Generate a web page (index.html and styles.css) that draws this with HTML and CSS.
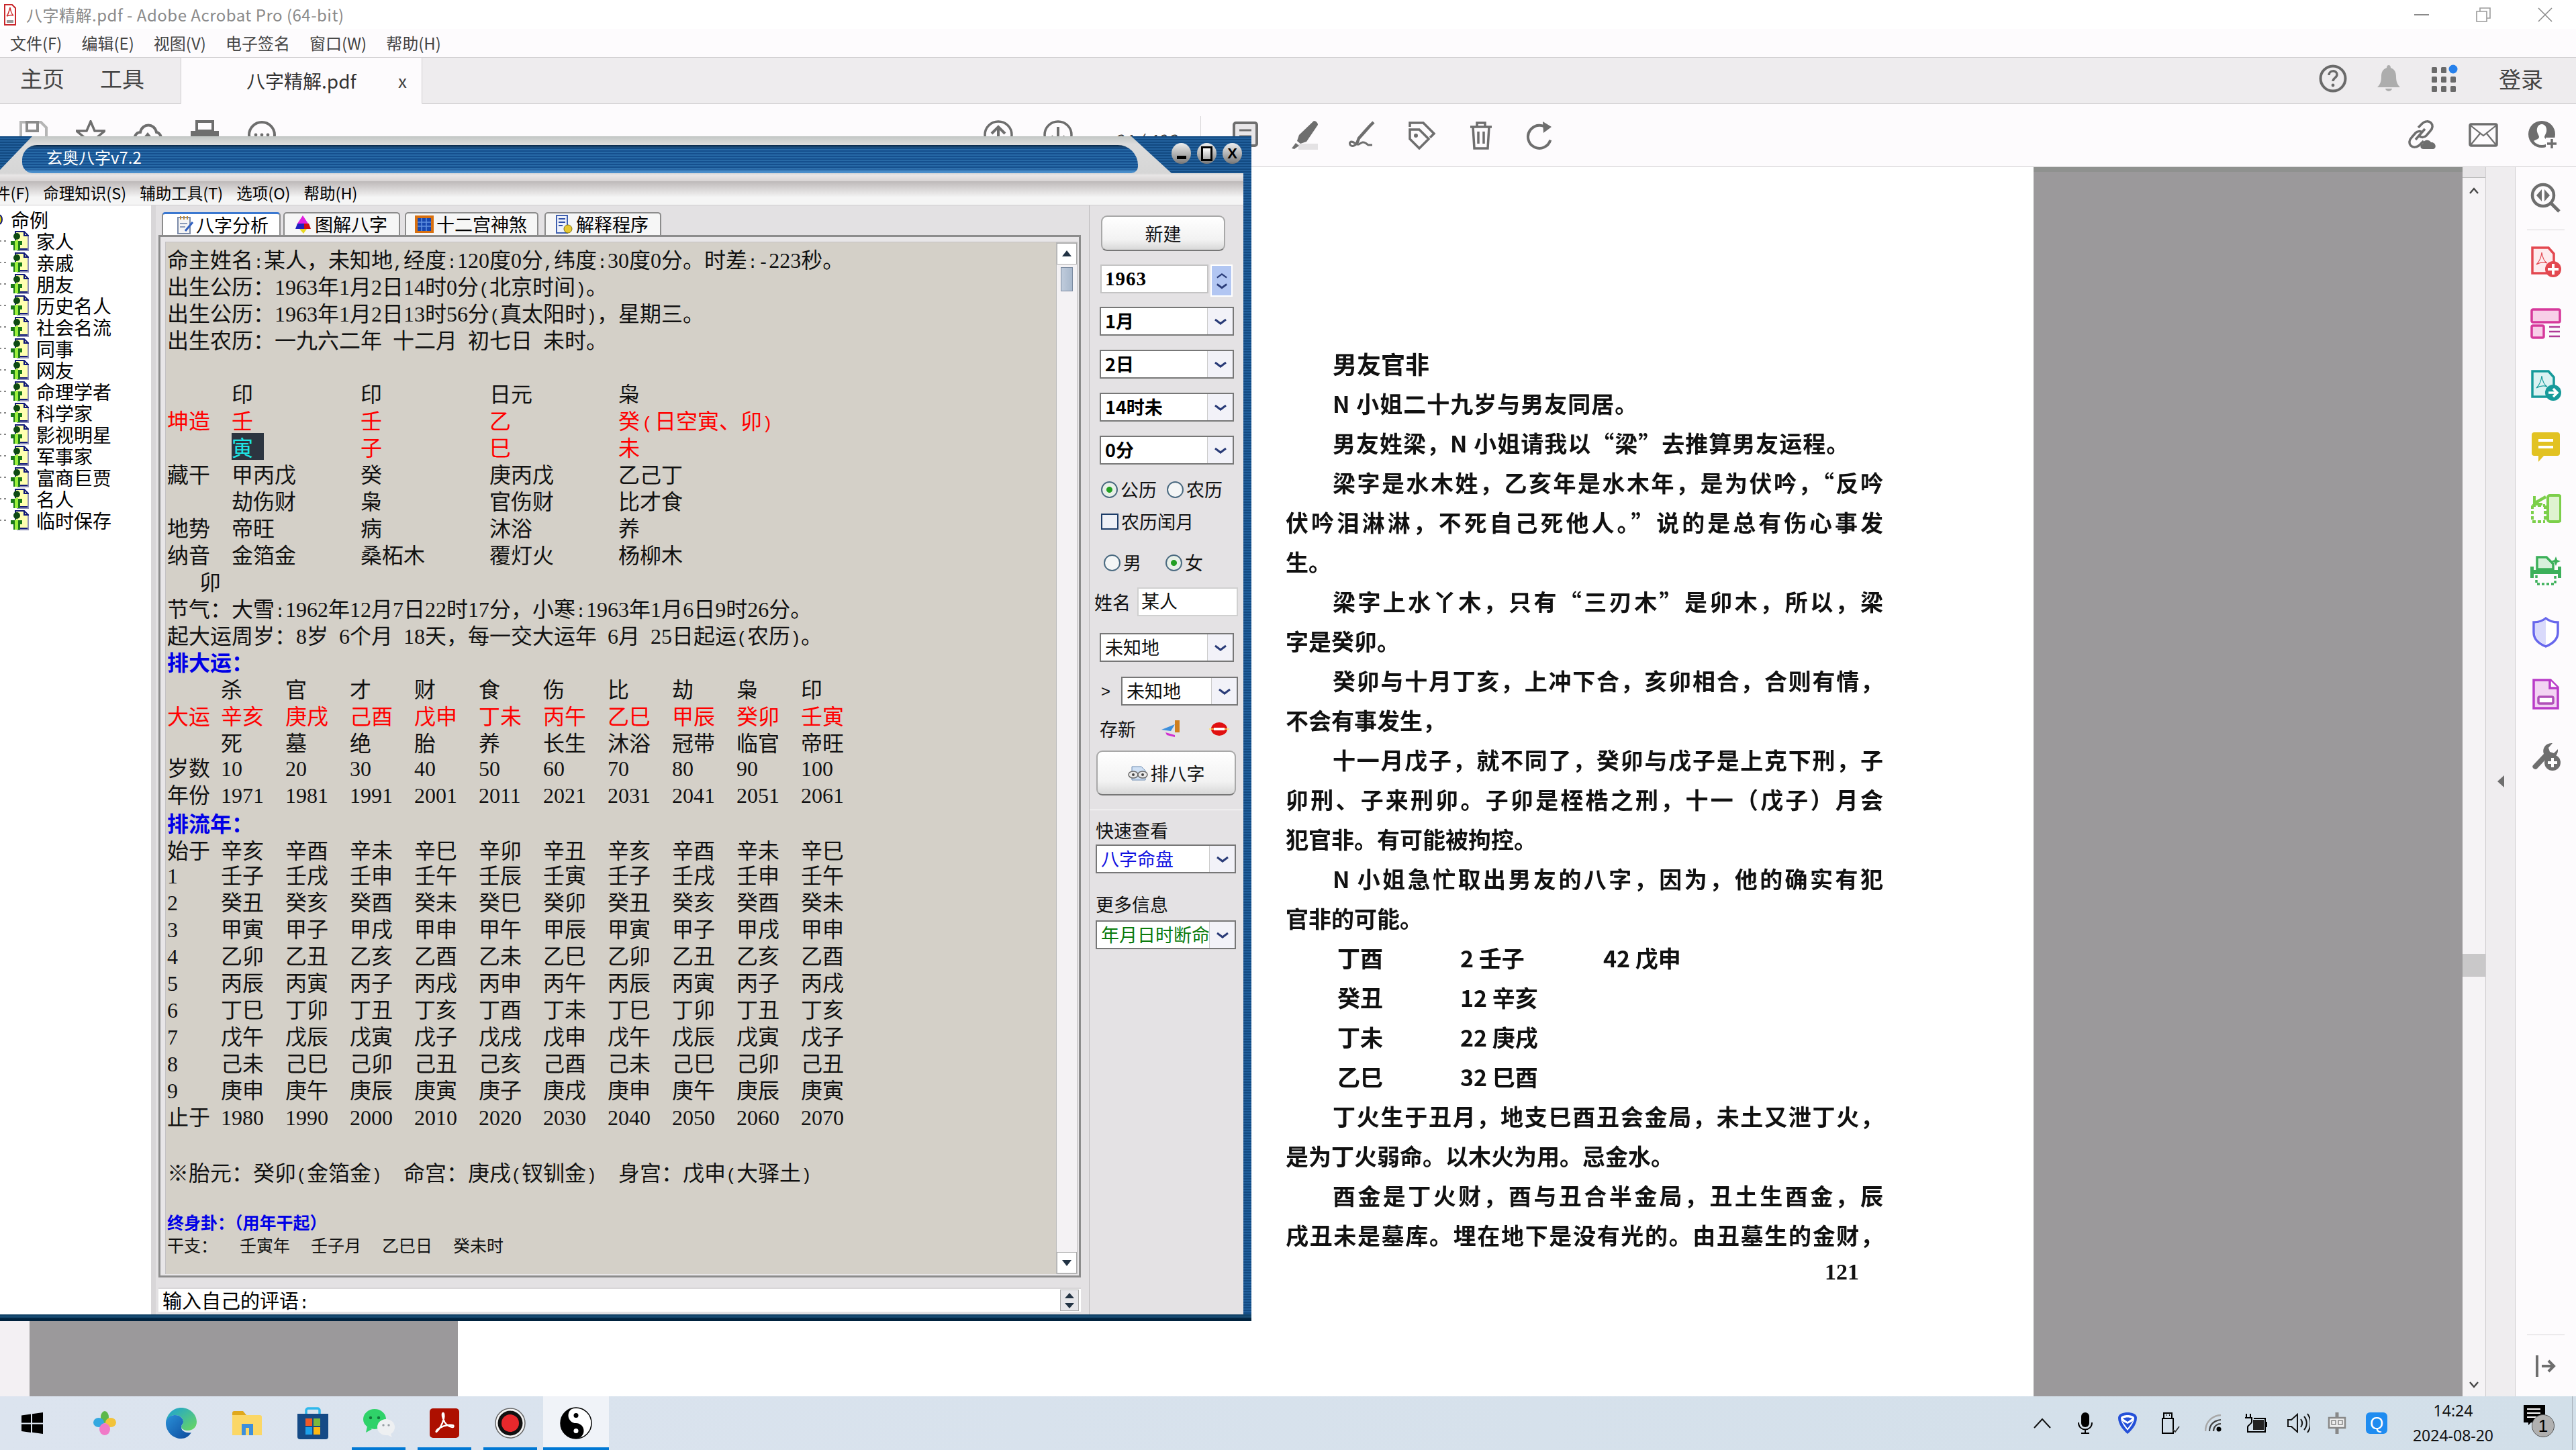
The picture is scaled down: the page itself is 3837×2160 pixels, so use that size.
FILE: index.html
```html
<!DOCTYPE html>
<html lang="zh-CN">

<head>
    <meta charset="UTF-8">
    <title>八字精解.pdf - Adobe Acrobat Pro (64-bit)</title>
    <link rel="stylesheet" href="styles.css">
</head>

<body>
    <svg class="defs" width="0" height="0">
        <symbol id="person" viewBox="0 0 30 30">
            <path d="M9 1h13l6 6v20H9z" fill="#ffffb0" stroke="#101878" stroke-width="2" />
            <path d="M22 1v6h6" fill="none" stroke="#101878" stroke-width="2" />
            <path d="M28 8v21H11" fill="none" stroke="#8f8fb8" stroke-width="2" />
            <circle cx="11" cy="8" r="5" fill="#0d4a12" />
            <path d="M2 15h17v6h-3v8H6v-8H2z" fill="#1a7a1a" />
            <path d="M8 14h5v15H8z" fill="#9cf03c" />
        </symbol>
        <symbol id="chev" viewBox="0 0 20 12">
            <path d="M2 3l8 6 8-6" fill="none" stroke="#2a3c78" stroke-width="3" />
        </symbol>
    </svg>

    <div class="app">
        <div class="titlebar">
            <svg class="title-icon" viewBox="0 0 18 32">
                <path d="M1 1h11l5 5v25H1z" fill="#fff" stroke="#c8262a" stroke-width="2" />
                <path d="M9 5c-2 8-3 11-5 13 4-2 7-2 10-1-3-2-4-6-5-12z" fill="none" stroke="#d03030" stroke-width="1.5" />
                <path d="M4 24h10v4H4z" fill="#999" />
            </svg>
            <span class="title-text">八字精解.pdf - Adobe Acrobat Pro (64-bit)</span>
            <div class="win-btns">
                <span class="win-btn"><svg width="22" height="4"><path d="M0 2h22" stroke="#8a8a8a" stroke-width="2" /></svg></span>
                <span class="win-btn"><svg width="22" height="22" viewBox="0 0 22 22"><path d="M1 6h15v15H1zM6 6V1h15v15h-5" fill="none" stroke="#9a9a9a" stroke-width="1.6" /></svg></span>
                <span class="win-btn"><svg width="22" height="22" viewBox="0 0 22 22"><path d="M1 1l20 20M21 1L1 21" stroke="#8a8a8a" stroke-width="1.6" /></svg></span>
            </div>
        </div>

        <div class="menubar">
            <span>文件(F)</span>
            <span>编辑(E)</span>
            <span>视图(V)</span>
            <span>电子签名</span>
            <span>窗口(W)</span>
            <span>帮助(H)</span>
        </div>

        <div class="tabsbar">
            <span class="nav-tab">主页</span>
            <span class="nav-tab">工具</span>
            <div class="doc-tab">
                <span class="doc-tab-name">八字精解.pdf</span>
                <span class="doc-tab-x">x</span>
            </div>
            <div class="tabs-right">
                <svg class="tr-icon" viewBox="0 0 42 42">
                    <circle cx="21" cy="21" r="18.5" fill="none" stroke="#6a6a6a" stroke-width="4" />
                    <path d="M15 16c0-8 12-8 12-1 0 5-6 5-6 10" fill="none" stroke="#6a6a6a" stroke-width="3.5" />
                    <circle cx="21" cy="31" r="2.4" fill="#6a6a6a" />
                </svg>
                <svg class="tr-icon" viewBox="0 0 42 42">
                    <path d="M21 1c2 0 3 2 3 4 6 2 8 7 8 13 0 8 2 12 6 16H4c4-4 6-8 6-16 0-6 2-11 8-13 0-2 1-4 3-4z" fill="#adadad" />
                    <path d="M16 36h10c-1 5-9 5-10 0z" fill="#adadad" />
                </svg>
                <svg class="tr-icon tr-grid" viewBox="0 0 42 42">
                    <g fill="#6a6a6a">
                        <rect x="2" y="4" width="8" height="9" rx="1.5" /><rect x="16" y="4" width="8" height="9" rx="1.5" />
                        <rect x="2" y="18" width="8" height="9" rx="1.5" /><rect x="16" y="18" width="8" height="9" rx="1.5" /><rect x="30" y="18" width="8" height="9" rx="1.5" />
                        <rect x="2" y="32" width="8" height="9" rx="1.5" /><rect x="16" y="32" width="8" height="9" rx="1.5" /><rect x="30" y="32" width="8" height="9" rx="1.5" />
                    </g>
                    <circle cx="34" cy="7" r="6.5" fill="#2680eb" />
                </svg>
                <span class="login">登录</span>
            </div>
        </div>

        <div class="toolbar">
            <div class="tool-group tool-left">
                <svg class="tool" viewBox="0 0 44 44"><path d="M3 3h30l8 8v30H3z" fill="none" stroke="#b5b5b5" stroke-width="4" /><path d="M12 3h16v13H12z" fill="none" stroke="#8a8a8a" stroke-width="4" /></svg>
                <svg class="tool" viewBox="0 0 44 44"><path d="M22 2l6 14h15l-12 10 5 16-14-9-14 9 5-16L1 16h15z" fill="none" stroke="#6e6e6e" stroke-width="3.5" /></svg>
                <svg class="tool" viewBox="0 0 44 44"><path d="M4 36C-1 26 5 18 11 18 14 4 32 4 35 18c6 1 10 10 5 18" fill="none" stroke="#6e6e6e" stroke-width="4" /><path d="M22 18l-8 10h16z" fill="#6e6e6e" /></svg>
                <svg class="tool" viewBox="0 0 44 44"><path d="M10 2h24v14H10z" fill="none" stroke="#6e6e6e" stroke-width="4" /><path d="M1 16h42v16H1z" fill="#6e6e6e" /></svg>
                <svg class="tool" viewBox="0 0 44 44"><circle cx="22" cy="22" r="19" fill="none" stroke="#6e6e6e" stroke-width="4" /><circle cx="13" cy="22" r="2.4" fill="#6e6e6e" /><circle cx="22" cy="22" r="2.4" fill="#6e6e6e" /><circle cx="31" cy="22" r="2.4" fill="#6e6e6e" /></svg>
            </div>
            <div class="tool-group tool-pager">
                <svg class="tool" viewBox="0 0 44 44"><circle cx="22" cy="22" r="20" fill="none" stroke="#6e6e6e" stroke-width="3.5" /><path d="M22 34V10M12 20l10-10 10 10" fill="none" stroke="#6e6e6e" stroke-width="4" /></svg>
                <svg class="tool" viewBox="0 0 44 44"><circle cx="22" cy="22" r="20" fill="none" stroke="#6e6e6e" stroke-width="3.5" /><path d="M22 10v24M12 24l10 10 10-10" fill="none" stroke="#6e6e6e" stroke-width="4" /></svg>
                <span class="pager-text">64 / 406</span>
            </div>
            <div class="tool-sep"></div>
            <div class="tool-group tool-edit">
                <svg class="tool" viewBox="0 0 44 44"><rect x="6" y="4" width="34" height="34" rx="3" fill="#e8e6e8" stroke="#6e6e6e" stroke-width="4" /><path d="M14 15h18M14 24h18" stroke="#6e6e6e" stroke-width="3" /></svg>
                <svg class="tool" viewBox="0 0 44 44"><rect x="14" y="35" width="29" height="9" fill="#e4e2e4" /><path d="M37 1c3 0 6 3 6 6L26 32l-9 3-5-4 3-9z" fill="#6e6e6e" /><path d="M10 34l5 4-7 5-4-1z" fill="#6e6e6e" /></svg>
                <svg class="tool" viewBox="0 0 44 44"><path d="M38 3l-6 6-16 18-3 8" fill="none" stroke="#6e6e6e" stroke-width="4.5" /><path d="M13 35c-8 8-12 0-10-2 4-4 9 5 13 3 5-3 6-4 10-2l4 3h6" fill="none" stroke="#6e6e6e" stroke-width="3" /></svg>
                <svg class="tool" viewBox="0 0 44 44"><path d="M4 10V4h20l16 16-6 6" fill="none" stroke="#6e6e6e" stroke-width="3.5" /><path d="M4 14h14l14 14-14 14L4 28z" fill="none" stroke="#6e6e6e" stroke-width="3.5" /><circle cx="13" cy="23" r="3" fill="#6e6e6e" /></svg>
                <svg class="tool" viewBox="0 0 44 44"><path d="M6 10h32M16 10V4h12v6M10 10l2 32h20l2-32M18 17v18M26 17v18" fill="none" stroke="#6e6e6e" stroke-width="3.5" /></svg>
                <svg class="tool" viewBox="0 0 44 44"><path d="M30 10A17 17 0 1 0 39 24" fill="none" stroke="#6e6e6e" stroke-width="4" transform="rotate(20 22 22)" /><path d="M26 2l13 8-12 9z" fill="#6e6e6e" /></svg>
            </div>
            <div class="tool-group tool-right">
                <svg class="tool tool-wide" viewBox="0 0 50 46"><path d="M16 30l14-16M20 12l6-6c4-4 10-4 13-1s3 8-1 12l-6 7c-3 3-7 3-10 1M28 32l-6 6c-4 4-10 4-13 1s-3-8 1-12l6-7c3-3 7-3 10-1" fill="none" stroke="#6e6e6e" stroke-width="3.5" /><path d="M28 44c-6 0-6-7-1-8 1-6 9-7 12-2 7-1 10 10 2 10z" fill="#6e6e6e" /></svg>
                <svg class="tool" viewBox="0 0 44 36"><rect x="2" y="2" width="40" height="32" rx="2" fill="none" stroke="#6e6e6e" stroke-width="3.5" /><path d="M3 4l19 15L41 4M3 33l14-17M41 33L27 16" fill="none" stroke="#6e6e6e" stroke-width="2.2" /></svg>
                <svg class="tool" viewBox="0 0 44 44"><circle cx="20" cy="21" r="20" fill="#6e6e6e" /><path d="M20 6c5 0 8 5 7 11-1 4-3 6-3 8 0 3 5 4 8 6-3 4-7 6-12 6s-9-2-12-6c3-2 8-3 8-6 0-2-2-4-3-8-1-6 2-11 7-11z" fill="#fff" /><path d="M26 26h18v18H26z" fill="#fdfbfd" /><path d="M35 28v14M28 35h14" stroke="#6e6e6e" stroke-width="3.5" /></svg>
            </div>
        </div>

        <div class="docarea">
            <div class="doc-gutter"></div>
            <div class="doc-grey doc-grey-left"></div>
            <div class="page">
                <div class="scan">
                    <p class="scan-title">男友官非</p>
                    <p class="ind short">N 小姐二十九岁与男友同居。</p>
                    <p class="ind short">男友姓梁，N 小姐请我以“梁”去推算男友运程。</p>
                    <p class="ind full">梁字是水木姓，乙亥年是水木年，是为伏吟，“反吟</p>
                    <p class="full">伏吟泪淋淋，不死自己死他人。”说的是总有伤心事发</p>
                    <p>生。</p>
                    <p class="ind full">梁字上水丫木，只有“三刃木”是卯木，所以，梁</p>
                    <p>字是癸卯。</p>
                    <p class="ind full">癸卯与十月丁亥，上冲下合，亥卯相合，合则有情，</p>
                    <p>不会有事发生，</p>
                    <p class="ind full">十一月戊子，就不同了，癸卯与戊子是上克下刑，子</p>
                    <p class="full">卯刑、子来刑卯。子卯是桎梏之刑，十一（戊子）月会</p>
                    <p>犯官非。有可能被拘控。</p>
                    <p class="ind full">N 小姐急忙取出男友的八字，因为，他的确实有犯</p>
                    <p>官非的可能。</p>
                    <p class="pillar"><span>丁酉</span><span>2 壬子</span><span>42 戊申</span></p>
                    <p class="pillar"><span>癸丑</span><span>12 辛亥</span></p>
                    <p class="pillar"><span>丁未</span><span>22 庚戌</span></p>
                    <p class="pillar"><span>乙巳</span><span>32 巳酉</span></p>
                    <p class="ind full">丁火生于丑月，地支巳酉丑会金局，未土又泄丁火，</p>
                    <p>是为丁火弱命。以木火为用。忌金水。</p>
                    <p class="ind full">酉金是丁火财，酉与丑合半金局，丑土生酉金，辰</p>
                    <p class="full">戌丑未是墓库。埋在地下是没有光的。由丑墓生的金财，</p>
                    <p class="folio">121</p>
                </div>
            </div>
            <div class="doc-grey doc-grey-right"></div>
            <div class="doc-scroll">
                <div class="doc-scroll-cap"></div>
                <svg class="doc-scroll-up" width="14" height="12" viewBox="0 0 14 12"><path d="M1 10l6-7 6 7" fill="none" stroke="#444" stroke-width="2.4" /></svg>
                <div class="doc-scroll-thumb"></div>
                <svg class="doc-scroll-down" width="14" height="12" viewBox="0 0 14 12"><path d="M1 2l6 7 6-7" fill="none" stroke="#444" stroke-width="2.4" /></svg>
            </div>
            <div class="doc-panel">
                <svg width="12" height="18" viewBox="0 0 12 18"><path d="M11 0v18L1 9z" fill="#6e6e6e" /></svg>
            </div>
            <div class="rail">
                <svg class="rail-icon" viewBox="0 0 46 46"><circle cx="19" cy="19" r="16" fill="none" stroke="#6e6e6e" stroke-width="4.5" /><path d="M30 30l13 13" stroke="#6e6e6e" stroke-width="5" /><path d="M17 10v18l-8-9zM21 10v18l8-9z" fill="#6e6e6e" /></svg>
                <div class="rail-sep"></div>
                <svg class="rail-icon" viewBox="0 0 46 46"><path d="M3 2h24l8 9v29H3z" fill="#fdecee" stroke="#e34850" stroke-width="3.5" /><path d="M17 9c-1 9-4 14-8 18 5-3 11-4 16-2-5-3-7-9-8-16z" fill="none" stroke="#e34850" stroke-width="1.2" /><circle cx="34" cy="34" r="12" fill="#e34850" /><path d="M34 26v16M26 34h16" stroke="#fff" stroke-width="4" /></svg>
                <svg class="rail-icon" viewBox="0 0 46 46"><rect x="2" y="2" width="42" height="19" rx="2" fill="#f8cfe8" stroke="#d6399b" stroke-width="3.5" /><rect x="2" y="26" width="18" height="18" rx="2" fill="#f8cfe8" stroke="#d6399b" stroke-width="3.5" /><path d="M28 28h16M28 35h16M28 42h16" stroke="#b03a96" stroke-width="2.4" /></svg>
                <svg class="rail-icon" viewBox="0 0 46 46"><path d="M3 2h24l8 9v29H3z" fill="#dcf2f2" stroke="#169a9a" stroke-width="3.5" /><path d="M17 9c-1 9-4 14-8 18 5-3 11-4 16-2-5-3-7-9-8-16z" fill="none" stroke="#169a9a" stroke-width="1.2" /><circle cx="34" cy="34" r="12" fill="#169a9a" /><path d="M27 34h13M34 28l6 6-6 6" fill="none" stroke="#fff" stroke-width="3.5" /></svg>
                <svg class="rail-icon" viewBox="0 0 46 46"><path d="M6 1h34a4 4 0 0 1 4 4v27a4 4 0 0 1-4 4H20l-8 9v-9H6a4 4 0 0 1-4-4V5a4 4 0 0 1 4-4z" fill="#e2c222" /><path d="M12 13h22M12 23h22" stroke="#fff" stroke-width="4" /></svg>
                <svg class="rail-icon" viewBox="0 0 46 46"><rect x="26" y="3" width="19" height="39" rx="3" fill="#dff3d0" stroke="#7ccf4a" stroke-width="4" /><path d="M3 18h19M3 18v24h19M22 18v24" fill="none" stroke="#7ccf4a" stroke-width="4" stroke-dasharray="5 3" /><path d="M20 2L6 10v-7h-4v14h14v-4h-6l12-7z" fill="#7ccf4a" transform="translate(2 1)" /></svg>
                <svg class="rail-icon" viewBox="0 0 46 46"><path d="M10 21V3h14l10 10v8z" fill="#d8f0dc" stroke="#3cb05a" stroke-width="3.5" /><path d="M0 17h5v5h36v-5h5v17h-5v-6H5v6H0z" fill="#3cb05a" /><path d="M9 30v13h28V30" fill="none" stroke="#3cb05a" stroke-width="3.5" stroke-dasharray="4 3" /><path d="M38 2l2 5 5 2-5 2-2 5-2-5-5-2 5-2z" fill="#3cb05a" /></svg>
                <svg class="rail-icon" viewBox="0 0 46 46"><path d="M23 2c5 4 11 6 18 6v15c0 10-8 17-18 21C13 40 5 33 5 23V8c7 0 13-2 18-6z" fill="#fff" stroke="#6767ec" stroke-width="3.5" /><path d="M23 4c-5 4-10 5-16 6v13c0 9 8 15 16 19z" fill="#d9dafb" /></svg>
                <svg class="rail-icon" viewBox="0 0 46 46"><path d="M5 2h25l11 11v31H5z" fill="#f3d4f3" stroke="#b93cc8" stroke-width="3.5" /><path d="M29 2v12h12" fill="#fff" stroke="#b93cc8" stroke-width="3.5" /><rect x="12" y="27" width="22" height="10" rx="2" fill="#fff" stroke="#b050b8" stroke-width="3.5" /></svg>
                <svg class="rail-icon" viewBox="0 0 46 46"><path d="M4 37L20 20c-3-8 3-17 13-16l-6 7 2 6 6 2 6-6c1 9-7 16-16 13L10 42c-3 3-9-2-6-5z" fill="#6e6e6e" /><circle cx="33" cy="33" r="12" fill="#6e6e6e" /><path d="M33 26v14M26 33h14" stroke="#fff" stroke-width="4" /></svg>
                <div class="rail-sep rail-sep-end"></div>
                <svg class="rail-icon rail-collapse" viewBox="0 0 30 32"><path d="M2 0v32" stroke="#6e6e6e" stroke-width="4" /><path d="M9 16h17M19 8l8 8-8 8" fill="none" stroke="#6e6e6e" stroke-width="4" /></svg>
            </div>
        </div>

        <div class="taskbar">
            <span class="tb-item tb-start">
                <svg width="32" height="32" viewBox="0 0 32 32"><path d="M0 4.500l14-2v13H0zM16 2.200l16-2.200v15.500H16zM0 17.500h14v12.500l-14-2zM16 17.500h16V32l-16-2.300z" fill="#000" /></svg>
            </span>
            <span class="tb-item tb-flower">
                <svg width="34" height="36" viewBox="0 0 34 36"><ellipse cx="17" cy="9" rx="6" ry="9" fill="#5cb84a" /><ellipse cx="8" cy="17" rx="8" ry="7" fill="#34a8e0" /><ellipse cx="26" cy="17" rx="8" ry="7" fill="#f2c33a" /><ellipse cx="17" cy="27" rx="8" ry="9" fill="#f07ac8" /></svg>
            </span>
            <span class="tb-item tb-edge">
                <svg width="48" height="48" viewBox="0 0 48 48">
                    <defs>
                        <linearGradient id="edgeTop" x1="0" y1="0" x2="1" y2="1"><stop offset="0" stop-color="#1aa0d8" /><stop offset="1" stop-color="#6cd85c" /></linearGradient>
                        <linearGradient id="edgeLow" x1="0" y1="0" x2="1" y2="1"><stop offset="0" stop-color="#2a90d8" /><stop offset="1" stop-color="#0c4a9c" /></linearGradient>
                    </defs>
                    <path d="M24 1c13 0 23 10 23 21 0 8-6 13-13 13-5 0-10-2-10-6 0-2 3-4 3-7 0-6-6-10-12-10C9 12 3 17 1 23 2 11 12 1 24 1z" fill="url(#edgeTop)" />
                    <path d="M1 24c0-7 7-12 14-12 7 0 12 5 12 10 0 3-3 4-3 8 0 6 7 9 15 8-4 6-9 9-15 9C11 47 1 36 1 24z" fill="url(#edgeLow)" />
                </svg>
            </span>
            <span class="tb-item">
                <svg width="44" height="36" viewBox="0 0 44 36"><path d="M0 3a3 3 0 0 1 3-3h13l5 6H0z" fill="#e0a81c" /><path d="M0 6h41a3 3 0 0 1 3 3v27H0z" fill="#fbd766" /><path d="M14 36V19h17v17h-6V25h-5v11z" fill="#3d8fdc" /></svg>
            </span>
            <span class="tb-item">
                <svg width="46" height="48" viewBox="0 0 46 48"><path d="M13 10V5a3 3 0 0 1 3-3h14a3 3 0 0 1 3 3v5" fill="none" stroke="#2fb8ec" stroke-width="3.500" /><path d="M0 10h46v34a4 4 0 0 1-4 4H4a4 4 0 0 1-4-4z" fill="#154a86" /><rect x="12" y="17" width="10" height="11" fill="#f05a28" /><rect x="24" y="17" width="10" height="11" fill="#7cb93c" /><rect x="12" y="30" width="10" height="11" fill="#1ea0ea" /><rect x="24" y="30" width="10" height="11" fill="#fcb814" /></svg>
            </span>
            <span class="tb-item tb-open">
                <svg width="48" height="42" viewBox="0 0 48 42"><ellipse cx="18" cy="15" rx="17" ry="15" fill="#2fd269" /><path d="M7 26l-2 9 9-5z" fill="#2fd269" /><circle cx="12" cy="13" r="2.200" fill="#12763a" /><circle cx="24" cy="13" r="2.200" fill="#12763a" /><ellipse cx="35" cy="27" rx="13" ry="12" fill="#eef0f2" /><path d="M41 35l3 7-8-4z" fill="#eef0f2" /><circle cx="31" cy="24" r="1.700" fill="#99a0a6" /><circle cx="39" cy="24" r="1.700" fill="#99a0a6" /></svg>
            </span>
            <span class="tb-item tb-open">
                <svg width="44" height="44" viewBox="0 0 44 44"><rect x="0" y="0" width="44" height="44" rx="5" fill="#ad0f00" /><path d="M10 35c4-3 9-11 11-20 1-5 0-8-1-8s-2 3 0 8c2 7 7 12 14 13 2 0 2-3 0-3-7-1-15 1-22 6-2 2-3 4-2 4z" fill="none" stroke="#fff" stroke-width="2.400" /></svg>
            </span>
            <span class="tb-item tb-open">
                <svg width="46" height="46" viewBox="0 0 46 46"><circle cx="23" cy="23" r="22" fill="#f4f4f4" stroke="#666" stroke-width="1.500" /><circle cx="23" cy="23" r="18.500" fill="#111" /><circle cx="23" cy="23" r="13" fill="#e8282c" /></svg>
            </span>
            <span class="tb-item tb-open tb-active">
                <svg width="48" height="48" viewBox="0 0 48 48"><circle cx="24" cy="24" r="23" fill="#fff" stroke="#000" stroke-width="1.500" /><path d="M24 1a23 23 0 0 0 0 46a11.500 11.500 0 0 0 0-23a11.500 11.500 0 0 1 0-23z" fill="#000" /><circle cx="24" cy="12.500" r="3.500" fill="#000" /><circle cx="24" cy="35.500" r="3.500" fill="#fff" /></svg>
            </span>

            <div class="tray">
                <span class="tray-item"><svg width="26" height="16" viewBox="0 0 26 16"><path d="M1 15L13 2l12 13" fill="none" stroke="#111" stroke-width="2" /></svg></span>
                <span class="tray-item"><svg width="24" height="32" viewBox="0 0 24 32"><rect x="6" y="0" width="12" height="22" rx="6" fill="#000" /><path d="M2 15c0 14 20 14 20 0M12 26v5M6 31h12" fill="none" stroke="#000" stroke-width="2" /></svg></span>
                <span class="tray-item"><svg width="32" height="32" viewBox="0 0 32 32"><path d="M16 0c6 0 14 2 14 8 0 10-8 19-14 24C10 27 2 18 2 8c0-6 8-8 14-8z" fill="#2450d8" /><path d="M16 4c4 0 9 1 10 4 0 7-6 14-10 19C12 22 6 15 6 8c1-3 6-4 10-4z" fill="#fff" /><path d="M8 13l8 11 8-11-8 4z" fill="#2450d8" /><path d="M9 9c4-2 10-2 14 0l-7 5z" fill="#2450d8" /></svg></span>
                <span class="tray-item"><svg width="28" height="32" viewBox="0 0 28 32"><path d="M4 9V1h12v8M2 9h16v22H2z" fill="none" stroke="#000" stroke-width="2" /><path d="M8 4h1M12 4h1" stroke="#000" stroke-width="2" /><path d="M18 26l3 3 6-8" fill="none" stroke="#333" stroke-width="1.800" /></svg></span>
                <span class="tray-item"><svg width="26" height="26" viewBox="0 0 26 26"><path d="M1 25C1 12 10 2 24 1" fill="none" stroke="#a8a8a8" stroke-width="2.500" /><path d="M7 25c0-10 7-16 17-17M13 25c0-6 4-11 11-11" fill="none" stroke="#444" stroke-width="2.200" /><circle cx="21" cy="22" r="3.500" fill="#000" /></svg></span>
                <span class="tray-item"><svg width="34" height="28" viewBox="0 0 34 28"><path d="M3 0v6M9 0v6M1 6h10v6c0 4-6 4-6 8v7h26V7H14" fill="none" stroke="#000" stroke-width="2" /><rect x="13" y="9" width="16" height="15" fill="#222" /><rect x="31" y="12" width="3" height="8" fill="#000" /></svg></span>
                <span class="tray-item"><svg width="34" height="30" viewBox="0 0 34 30"><path d="M1 10h5l9-8v26l-9-8H1z" fill="none" stroke="#111" stroke-width="2" /><path d="M20 9c3 4 3 8 0 12M25 5c5 6 5 14 0 20M30 1c6 8 6 20 0 28" fill="none" stroke="#111" stroke-width="2" /></svg></span>
                <span class="tray-item tray-ime"><svg width="28" height="32" viewBox="0 0 28 32"><path d="M14 0v32" stroke="#888" stroke-width="5" /><rect x="2" y="8" width="24" height="15" fill="#eee" stroke="#888" stroke-width="2.500" /><path d="M6 12h6v6H6zM16 12h6v6h-6z" fill="none" stroke="#888" stroke-width="1.500" /></svg></span>
                <span class="tray-item tray-q"><span class="q-logo">Q</span></span>
                <div class="clock">
                    <span>14:24</span>
                    <span>2024-08-20</span>
                </div>
                <div class="notify">
                    <svg width="34" height="30" viewBox="0 0 34 30"><path d="M1 0h32v26H12l-4 4v-4H1z" fill="#000" /><path d="M6 6h20M6 12h20M6 18h20" stroke="#fff" stroke-width="2" /></svg>
                    <span class="notify-badge">1</span>
                </div>
                <div class="tb-edge-line"></div>
            </div>
        </div>
    </div>

    <!-- ventana de Xuan'ao Bazi, encima de Acrobat -->
    <div class="dlg">
        <div class="dlg-title">
            <div class="dlg-silver"></div>
            <div class="dlg-pill"><span class="dlg-name">玄奥八字v7.2</span></div>
            <div class="dlg-btns">
                <span class="dlg-btn"><i class="dlg-min"></i></span>
                <span class="dlg-btn"><i class="dlg-max"></i></span>
                <span class="dlg-btn">X</span>
            </div>
        </div>
        <div class="dlg-menu">
            <span class="dlg-menu-first">件(F)</span>
            <span>命理知识(S)</span>
            <span>辅助工具(T)</span>
            <span>选项(O)</span>
            <span>帮助(H)</span>
        </div>
        <div class="dlg-body">
            <div class="tree">
                <div class="tree-root"><i class="tree-knob"></i>命例</div>
                <div class="tree-row"><svg><use href="#person" /></svg>家人</div>
                <div class="tree-row"><svg><use href="#person" /></svg>亲戚</div>
                <div class="tree-row"><svg><use href="#person" /></svg>朋友</div>
                <div class="tree-row"><svg><use href="#person" /></svg>历史名人</div>
                <div class="tree-row"><svg><use href="#person" /></svg>社会名流</div>
                <div class="tree-row"><svg><use href="#person" /></svg>同事</div>
                <div class="tree-row"><svg><use href="#person" /></svg>网友</div>
                <div class="tree-row"><svg><use href="#person" /></svg>命理学者</div>
                <div class="tree-row"><svg><use href="#person" /></svg>科学家</div>
                <div class="tree-row"><svg><use href="#person" /></svg>影视明星</div>
                <div class="tree-row"><svg><use href="#person" /></svg>军事家</div>
                <div class="tree-row"><svg><use href="#person" /></svg>富商巨贾</div>
                <div class="tree-row"><svg><use href="#person" /></svg>名人</div>
                <div class="tree-row"><svg><use href="#person" /></svg>临时保存</div>
            </div>

            <div class="main">
                <div class="wtabs">
                    <div class="wtab wtab-on">
                        <svg width="26" height="28" viewBox="0 0 26 28"><path d="M2 3h18v24H2z" fill="#f4f4f4" stroke="#7a8aa8" stroke-width="2" /><path d="M6 1v5M11 1v5M16 1v5" stroke="#c09040" stroke-width="2" /><path d="M5 12h11M5 17h8" stroke="#8a9ab8" stroke-width="2" /><path d="M24 10L13 23" stroke="#3060c0" stroke-width="3" /></svg>
                        八字分析
                    </div>
                    <div class="wtab wtab-2">
                        <svg width="30" height="28" viewBox="0 0 30 28"><path d="M15 1l8 12H7z" fill="#e020e0" /><path d="M7 13h10v8H4z" fill="#2020c0" /><path d="M17 13h7l3 8H17z" fill="#d01010" /><path d="M10 21h11l-5 7z" fill="#e8d820" /></svg>
                        图解八字
                    </div>
                    <div class="wtab wtab-3">
                        <svg width="30" height="28" viewBox="0 0 30 28"><rect x="1" y="1" width="28" height="26" fill="#d87010" /><rect x="5" y="5" width="20" height="19" fill="#1848b0" /><path d="M5 11h20M5 17h20M11 5v19M18 5v19" stroke="#6090e0" stroke-width="1.500" /></svg>
                        十二宫神煞
                    </div>
                    <div class="wtab wtab-4">
                        <svg width="28" height="28" viewBox="0 0 28 28"><path d="M2 1h16v26H2z" fill="#eef2fa" stroke="#4060b0" stroke-width="2" /><path d="M5 6h10M5 11h10M5 16h6" stroke="#3050a8" stroke-width="2" /><circle cx="19" cy="21" r="6" fill="#e8c830" stroke="#807010" /></svg>
                        解释程序
                    </div>
                </div>

                <div class="frame">
                    <div class="result">
                        <div class="result-text">
                            <div class="ln">命主姓名<span class="p">:</span>某人，未知地<span class="p">,</span>经度<span class="p">:</span><span class="d">120</span>度<span class="d">0</span>分<span class="p">,</span>纬度<span class="p">:</span><span class="d">30</span>度<span class="d">0</span>分。时差<span class="p">:</span><span class="p">-</span><span class="d">223</span>秒。</div>
                            <div class="ln">出生公历：<span class="d">1963</span>年<span class="d">1</span>月<span class="d">2</span>日<span class="d">14</span>时<span class="d">0</span>分<span class="p">(</span>北京时间<span class="p">)</span>。</div>
                            <div class="ln">出生公历：<span class="d">1963</span>年<span class="d">1</span>月<span class="d">2</span>日<span class="d">13</span>时<span class="d">56</span>分<span class="p">(</span>真太阳时<span class="p">)</span>，星期三。</div>
                            <div class="ln">出生农历：一九六二年<span class="p"> </span>十二月<span class="p"> </span>初七日<span class="p"> </span>未时。</div>
                            <div class="ln"></div>

                            <div class="bz">
                                <span></span><span>印</span><span>印</span><span>日元</span><span>枭</span>
                                <span class="red">坤造</span><span class="red">壬</span><span class="red">壬</span><span class="red">乙</span><span class="red">癸<span class="p p-wide">(</span>日空寅、卯<span class="p">)</span></span>
                                <span></span><span><span class="zhi-on">寅</span></span><span class="red">子</span><span class="red">巳</span><span class="red">未</span>
                                <span>藏干</span><span>甲丙戊</span><span>癸</span><span>庚丙戊</span><span>乙己丁</span>
                                <span></span><span>劫伤财</span><span>枭</span><span>官伤财</span><span>比才食</span>
                                <span>地势</span><span>帝旺</span><span>病</span><span>沐浴</span><span>养</span>
                                <span>纳音</span><span>金箔金</span><span>桑柘木</span><span>覆灯火</span><span>杨柳木</span>
                            </div>

                            <div class="ln ln-shift">卯</div>
                            <div class="ln">节气：大雪<span class="p">:</span><span class="d">1962</span>年<span class="d">12</span>月<span class="d">7</span>日<span class="d">22</span>时<span class="d">17</span>分，小寒<span class="p">:</span><span class="d">1963</span>年<span class="d">1</span>月<span class="d">6</span>日<span class="d">9</span>时<span class="d">26</span>分。</div>
                            <div class="ln">起大运周岁：<span class="d">8</span>岁<span class="p"> </span><span class="d">6</span>个月<span class="p"> </span><span class="d">18</span>天，每一交大运年<span class="p"> </span><span class="d">6</span>月<span class="p"> </span><span class="d">25</span>日起运<span class="p">(</span>农历<span class="p">)</span>。</div>
                            <div class="ln blue">排大运：</div>

                            <div class="yun">
                                <span></span><span>杀</span><span>官</span><span>才</span><span>财</span><span>食</span><span>伤</span><span>比</span><span>劫</span><span>枭</span><span>印</span>
                            </div>
                            <div class="yun red">
                                <span>大运</span><span>辛亥</span><span>庚戌</span><span>己酉</span><span>戊申</span><span>丁未</span><span>丙午</span><span>乙巳</span><span>甲辰</span><span>癸卯</span><span>壬寅</span>
                            </div>
                            <div class="yun">
                                <span></span><span>死</span><span>墓</span><span>绝</span><span>胎</span><span>养</span><span>长生</span><span>沐浴</span><span>冠带</span><span>临官</span><span>帝旺</span>
                            </div>
                            <div class="yun nums">
                                <span>岁数</span><span>10</span><span>20</span><span>30</span><span>40</span><span>50</span><span>60</span><span>70</span><span>80</span><span>90</span><span>100</span>
                            </div>
                            <div class="yun nums">
                                <span>年份</span><span>1971</span><span>1981</span><span>1991</span><span>2001</span><span>2011</span><span>2021</span><span>2031</span><span>2041</span><span>2051</span><span>2061</span>
                            </div>
                            <div class="ln blue">排流年：</div>
                            <div class="yun">
                                <span>始于</span><span>辛亥</span><span>辛酉</span><span>辛未</span><span>辛巳</span><span>辛卯</span><span>辛丑</span><span>辛亥</span><span>辛酉</span><span>辛未</span><span>辛巳</span>
                            </div>
                            <div class="yun nums">
                                <span>1</span><span>壬子</span><span>壬戌</span><span>壬申</span><span>壬午</span><span>壬辰</span><span>壬寅</span><span>壬子</span><span>壬戌</span><span>壬申</span><span>壬午</span>
                            </div>
                            <div class="yun nums">
                                <span>2</span><span>癸丑</span><span>癸亥</span><span>癸酉</span><span>癸未</span><span>癸巳</span><span>癸卯</span><span>癸丑</span><span>癸亥</span><span>癸酉</span><span>癸未</span>
                            </div>
                            <div class="yun nums">
                                <span>3</span><span>甲寅</span><span>甲子</span><span>甲戌</span><span>甲申</span><span>甲午</span><span>甲辰</span><span>甲寅</span><span>甲子</span><span>甲戌</span><span>甲申</span>
                            </div>
                            <div class="yun nums">
                                <span>4</span><span>乙卯</span><span>乙丑</span><span>乙亥</span><span>乙酉</span><span>乙未</span><span>乙巳</span><span>乙卯</span><span>乙丑</span><span>乙亥</span><span>乙酉</span>
                            </div>
                            <div class="yun nums">
                                <span>5</span><span>丙辰</span><span>丙寅</span><span>丙子</span><span>丙戌</span><span>丙申</span><span>丙午</span><span>丙辰</span><span>丙寅</span><span>丙子</span><span>丙戌</span>
                            </div>
                            <div class="yun nums">
                                <span>6</span><span>丁巳</span><span>丁卯</span><span>丁丑</span><span>丁亥</span><span>丁酉</span><span>丁未</span><span>丁巳</span><span>丁卯</span><span>丁丑</span><span>丁亥</span>
                            </div>
                            <div class="yun nums">
                                <span>7</span><span>戊午</span><span>戊辰</span><span>戊寅</span><span>戊子</span><span>戊戌</span><span>戊申</span><span>戊午</span><span>戊辰</span><span>戊寅</span><span>戊子</span>
                            </div>
                            <div class="yun nums">
                                <span>8</span><span>己未</span><span>己巳</span><span>己卯</span><span>己丑</span><span>己亥</span><span>己酉</span><span>己未</span><span>己巳</span><span>己卯</span><span>己丑</span>
                            </div>
                            <div class="yun nums">
                                <span>9</span><span>庚申</span><span>庚午</span><span>庚辰</span><span>庚寅</span><span>庚子</span><span>庚戌</span><span>庚申</span><span>庚午</span><span>庚辰</span><span>庚寅</span>
                            </div>
                            <div class="yun nums">
                                <span>止于</span><span>1980</span><span>1990</span><span>2000</span><span>2010</span><span>2020</span><span>2030</span><span>2040</span><span>2050</span><span>2060</span><span>2070</span>
                            </div>
                            <div class="ln"></div>
                            <div class="ln">※胎元：癸卯<span class="p">(</span>金箔金<span class="p">)</span>　命宫：庚戌<span class="p">(</span>钗钏金<span class="p">)</span>　身宫：戊申<span class="p">(</span>大驿土<span class="p">)</span></div>
                            <div class="gua-head">终身卦：（用年干起）</div>
                            <div class="gua-row"><span>干支：</span><span>壬寅年</span><span>壬子月</span><span>乙巳日</span><span>癸未时</span></div>
                        </div>
                        <div class="vscroll">
                            <span class="vs-btn"><svg width="14" height="10" viewBox="0 0 14 10"><path d="M7 0l7 9H0z" fill="#234" /></svg></span>
                            <span class="vs-thumb"></span>
                            <span class="vs-btn vs-end"><svg width="14" height="10" viewBox="0 0 14 10"><path d="M7 10L0 1h14z" fill="#234" /></svg></span>
                        </div>
                    </div>
                </div>

                <div class="remark">
                    <span class="remark-text">输入自己的评语<span class="p">:</span></span>
                    <span class="remark-spin">
                        <svg width="16" height="10" viewBox="0 0 16 10"><path d="M8 1l7 8H1z" fill="#234" /></svg>
                        <svg width="16" height="10" viewBox="0 0 16 10"><path d="M8 9L1 1h14z" fill="#234" /></svg>
                    </span>
                </div>
            </div>

            <div class="ctl">
                <button class="big-btn new-btn">新建</button>
                <div class="year-row">
                    <span class="year-input">1963</span>
                    <span class="year-spin">
                        <svg width="18" height="12" viewBox="0 0 20 12"><path d="M2 9l8-6 8 6" fill="none" stroke="#2a3c78" stroke-width="2.500" /></svg>
                        <svg width="18" height="12" viewBox="0 0 20 12"><use href="#chev" /></svg>
                    </span>
                </div>
                <div class="combo combo-date"><span class="combo-val">1月</span><span class="combo-btn"><svg width="20" height="12"><use href="#chev" /></svg></span></div>
                <div class="combo combo-date"><span class="combo-val">2日</span><span class="combo-btn"><svg width="20" height="12"><use href="#chev" /></svg></span></div>
                <div class="combo combo-date"><span class="combo-val">14时未</span><span class="combo-btn"><svg width="20" height="12"><use href="#chev" /></svg></span></div>
                <div class="combo combo-date"><span class="combo-val">0分</span><span class="combo-btn"><svg width="20" height="12"><use href="#chev" /></svg></span></div>

                <div class="opt-row cal-row">
                    <i class="radio radio-on"></i><span>公历</span>
                    <i class="radio"></i><span>农历</span>
                </div>
                <div class="opt-row leap-row"><i class="check"></i><span>农历闰月</span></div>
                <div class="opt-row sex-row">
                    <i class="radio"></i><span>男</span>
                    <i class="radio radio-on"></i><span>女</span>
                </div>
                <div class="name-row">
                    <span>姓名</span>
                    <span class="name-input">某人</span>
                </div>
                <div class="combo combo-place"><span class="combo-val">未知地</span><span class="combo-btn"><svg width="20" height="12"><use href="#chev" /></svg></span></div>
                <div class="city-row">
                    <span class="city-arrow">&gt;</span>
                    <div class="combo combo-city"><span class="combo-val">未知地</span><span class="combo-btn"><svg width="20" height="12"><use href="#chev" /></svg></span></div>
                </div>
                <div class="save-row">
                    <span>存新</span>
                    <svg class="save-icon" width="28" height="26" viewBox="0 0 28 26"><path d="M0 14l20-8-6 10z" fill="#3d8fdc" /><path d="M20 0h7v18h-7z" fill="#d08020" /><path d="M6 18l14 4v3L8 22z" fill="#d030d0" /></svg>
                    <svg class="del-icon" width="30" height="20" viewBox="0 0 30 20"><ellipse cx="15" cy="10" rx="12" ry="10" fill="#e01010" /><path d="M0 10h30" stroke="#ffe060" stroke-width="1.500" /><path d="M7 8h16v4H7z" fill="#fff" /></svg>
                </div>
                <button class="big-btn paipan-btn">
                    <svg width="30" height="24" viewBox="0 0 30 24"><path d="M6 8V2h14l6 6v14H6z" fill="#cfe0f4" stroke="#6a8ab0" /><ellipse cx="8" cy="14" rx="7" ry="5" fill="#e8e8e8" stroke="#666" stroke-width="1.500" /><ellipse cx="22" cy="14" rx="7" ry="5" fill="#e8e8e8" stroke="#666" stroke-width="1.500" /><circle cx="8" cy="14" r="2" fill="#444" /><circle cx="22" cy="14" r="2" fill="#444" /></svg>
                    排八字
                </button>
                <div class="ctl-sep"></div>
                <div class="ctl-label quick-label">快速查看</div>
                <div class="combo combo-wide"><span class="combo-val val-blue">八字命盘</span><span class="combo-btn"><svg width="20" height="12"><use href="#chev" /></svg></span></div>
                <div class="ctl-label more-label">更多信息</div>
                <div class="combo combo-wide combo-more"><span class="combo-val val-green">年月日时断命</span><span class="combo-btn"><svg width="20" height="12"><use href="#chev" /></svg></span></div>
            </div>
        </div>
        <div class="dlg-foot"></div>
    </div>
</body>

</html>
```

FILE: styles.css
```css
* {
    box-sizing: border-box;
}

html,
body {
    margin: 0;
    width: 3837px;
    height: 2160px;
    overflow: hidden;
}

body {
    position: relative;
    font-family: "Noto Sans CJK SC", "Noto Sans", sans-serif;
    color: #222;
}

p {
    margin: 0;
}

i {
    font-style: normal;
}

.defs {
    position: absolute;
}

.app {
    display: flex;
    flex-direction: column;
    width: 3837px;
    height: 2160px;
}

/* acrobat: titulo y menu */
.titlebar {
    height: 43px;
    display: flex;
    align-items: center;
    background: #fff;
    padding-left: 6px;
}

.title-icon {
    width: 18px;
    height: 32px;
    margin-right: 15px;
}

.title-text {
    font-size: 24px;
    color: #8a8a8a;
    letter-spacing: .5px;
}

.win-btns {
    margin-left: auto;
    display: flex;
}

.win-btn {
    width: 92px;
    height: 43px;
    display: flex;
    align-items: center;
    justify-content: center;
}

.menubar {
    height: 42px;
    display: flex;
    align-items: center;
    gap: 29px;
    padding-left: 15px;
    background: #fdfbfd;
    font-size: 24px;
    color: #444;
}

.tabsbar {
    height: 70px;
    display: flex;
    align-items: stretch;
    background: #eeecee;
    border-top: 1px solid #cfcdcf;
    border-bottom: 1px solid #cfcdcf;
    padding-left: 30px;
}

.nav-tab {
    font-size: 33px;
    color: #444;
    margin-right: 53px;
    align-self: center;
    line-height: 1.2;
    margin-top: -6px;
}

.doc-tab {
    width: 360px;
    margin-left: 1px;
    margin-bottom: -1px;
    background: #fdfbfd;
    border-left: 1px solid #cfcdcf;
    border-right: 1px solid #cfcdcf;
    border-bottom: 1px solid #fdfbfd;
    display: flex;
    align-items: center;
    padding-left: 97px;
}

.doc-tab-name {
    font-size: 28px;
    color: #333;
    width: 226px;
}

.doc-tab-x {
    font-size: 26px;
    color: #444;
}

.tabs-right {
    margin-left: auto;
    display: flex;
    align-items: center;
    padding-right: 49px;
    margin-top: -6px;
}

.tr-icon {
    width: 42px;
    height: 42px;
    margin-right: 41px;
}

.tr-grid {
    margin-right: 60px;
}

.login {
    font-size: 33px;
    color: #444;
}

/* barra de herramientas */
.toolbar {
    height: 94px;
    display: flex;
    align-items: center;
    background: #fdfbfd;
    border-bottom: 1px solid #cfcdcf;
    padding-left: 28px;
}

.tool-group {
    display: flex;
    align-items: center;
    flex: none;
}

.tool {
    width: 44px;
    height: 44px;
    flex: none;
}

.tool-left {
    gap: 41px;
}

.tool-pager {
    margin-left: 1053px;
    gap: 45px;
    width: 280px;
}

.pager-text {
    font-size: 26px;
    color: #444;
    font-style: italic;
    margin-top: 14px;
    margin-left: 14px;
    white-space: nowrap;
}

.tool-sep {
    width: 1px;
    height: 94px;
    background: #d6d4d6;
    margin-left: 43px;
    margin-top: 38px;
}

.tool-edit {
    margin-left: 43px;
    gap: 44px;
}

.tool-right {
    margin-left: auto;
    gap: 45px;
    padding-right: 27px;
}

.tool-wide {
    width: 50px;
    height: 46px;
}

/* zona del documento */
.docarea {
    height: 1832px;
    display: flex;
}

.doc-gutter {
    width: 44px;
    background: #f3f0f3;
}

.doc-grey {
    background: #9b999b;
}

.doc-grey-left {
    width: 638px;
}

.doc-grey-right {
    width: 639px;
    box-shadow: inset 0 7px #8f918f;
}

.page {
    width: 2347px;
    background: #fff;
    padding: 263px 0 0 1233px;
}

.scan {
    width: 890px;
    font-size: 34px;
    font-weight: 700;
    line-height: 59px;
    color: #111;
    filter: blur(.7px);
}

.scan p {
    white-space: nowrap;
    height: 59px;
}

.scan .full {
    white-space: normal;
    text-align: justify;
    text-align-last: justify;
}

.scan .ind,
.scan-title,
.pillar {
    margin-left: 70px;
}

.short {
    letter-spacing: 1px;
}

.scan-title {
    font-size: 36px;
}

.pillar {
    display: flex;
}

.pillar span:nth-child(1) {
    width: 190px;
    padding-left: 7px;
}

.pillar span:nth-child(2) {
    width: 213px;
}

.scan .folio {
    text-align: right;
    padding-right: 36px;
    font-family: "Liberation Serif", serif;
    margin-top: -4px;
}

.doc-scroll {
    width: 35px;
    background: #f5f3f5;
    border-right: 1px solid #cfcdcf;
    display: flex;
    flex-direction: column;
    align-items: center;
}

.doc-scroll-cap {
    width: 100%;
    height: 16px;
    background: #e6e4e6;
    border-bottom: 1px solid #bbb;
}

.doc-scroll-up {
    margin-top: 13px;
}

.doc-scroll-thumb {
    width: 100%;
    height: 34px;
    background: #c9c8c9;
    margin-top: 1131px;
}

.doc-scroll-down {
    margin-top: auto;
    margin-bottom: 11px;
}

.doc-panel {
    width: 44px;
    background: #efedef;
    border-right: 1px solid #cfcdcf;
    display: flex;
    align-items: center;
    justify-content: center;
}

.rail {
    width: 90px;
    background: #fdfbfd;
    display: flex;
    flex-direction: column;
    align-items: center;
    padding-top: 23px;
}

.rail-icon {
    width: 46px;
    height: 46px;
    margin-bottom: 46px;
    flex: none;
}

.rail-sep {
    width: 56px;
    height: 1px;
    background: #d6d4d6;
    margin: -22px 0 24px;
}

.rail-sep-end {
    margin-top: auto;
    margin-bottom: 30px;
}

.rail-collapse {
    width: 30px;
    height: 32px;
    margin-bottom: 29px;
}

/* barra de tareas */
.taskbar {
    height: 80px;
    display: flex;
    align-items: stretch;
    background: linear-gradient(90deg, #dce4ef, #d2dfe9);
}

.tb-item {
    position: relative;
    width: 98px;
    display: flex;
    align-items: center;
    justify-content: center;
}

.tb-start {
    width: 96px;
}

.tb-flower {
    margin-left: 11px;
}

.tb-edge {
    margin-left: 16px;
}

.tb-open::after {
    content: "";
    position: absolute;
    left: 9px;
    right: 9px;
    bottom: 0;
    height: 4px;
    background: #0078d4;
}

.tb-active {
    background: #f0f3f8;
}

.tb-active::after {
    left: 0;
    right: 0;
}

.tray {
    margin-left: auto;
    display: flex;
    align-items: center;
}

.tray-item {
    width: 63.7px;
    display: flex;
    align-items: center;
    justify-content: center;
}

.tray-ime {
    width: 50px;
}

.tray-q {
    width: 68px;
}

.q-logo {
    width: 32px;
    height: 32px;
    border-radius: 6px;
    background: #1f8cf0;
    color: #fff;
    font: 26px/32px "Liberation Sans", sans-serif;
    text-align: center;
}

.clock {
    width: 160px;
    display: flex;
    flex-direction: column;
    align-items: center;
    font: 23px/37px "Noto Sans", sans-serif;
    color: #111;
}

.notify {
    position: relative;
    width: 60px;
    margin-left: 24px;
    margin-top: -20px;
}

.notify-badge {
    position: absolute;
    left: 13px;
    top: 14px;
    width: 34px;
    height: 34px;
    border-radius: 50%;
    background: #b0b0b0;
    border: 1px solid #555;
    font: 26px/32px "Liberation Sans", sans-serif;
    color: #000;
    text-align: center;
}

.tb-edge-line {
    width: 1px;
    height: 80px;
    background: #a8b0b8;
    margin: 0 5px 0 13px;
}

/* ventana xuan'ao */
.dlg {
    position: absolute;
    left: 0;
    top: 203px;
    width: 1864px;
    height: 1765px;
    display: flex;
    flex-direction: column;
    background: repeating-linear-gradient(180deg, #124a82 0 2px, #22609c 2px 4px);
}

.dlg-title {
    position: relative;
    height: 67px;
    flex: none;
}

.dlg-silver {
    position: absolute;
    inset: 0 0 0 0;
    width: 1852px;
    background: linear-gradient(180deg, #c2c6c4 0, #dcdcdc 12px, #d6d6d6 55px, #e8e6e6 58px, #d8d4d4 67px);
    clip-path: polygon(48px 0, 1685px 0, 1745px 55px, 1852px 55px, 1852px 67px, 0 67px, 0 50px);
}

.dlg-pill {
    position: absolute;
    left: 33px;
    top: 13px;
    width: 1662px;
    height: 42px;
    border-radius: 22px 30px 10px 16px / 22px 30px 10px 16px;
    background:
        linear-gradient(180deg, #0c2a48 0, rgba(12, 42, 72, 0) 6px, rgba(70, 140, 200, 0) 34px, rgba(90, 160, 220, .9) 42px),
        repeating-linear-gradient(180deg, #154f8e 0 2px, #2769a6 2px 4px);
    padding: 0 0 6px 36px;
    display: flex;
    align-items: center;
}

.dlg-name {
    color: #fff;
    font-size: 24px;
    line-height: 1.2;
}

.dlg-btns {
    position: absolute;
    left: 1745px;
    top: 10px;
    display: flex;
    gap: 9px;
}

.dlg-btn {
    width: 29px;
    height: 31px;
    border-radius: 50%;
    background: linear-gradient(180deg, #eee, #b0b0b0 55%, #777);
    display: flex;
    align-items: center;
    justify-content: center;
    font: 700 22px "Liberation Sans", sans-serif;
    color: #000;
}

.dlg-min {
    width: 14px;
    height: 5px;
    background: #000;
    margin-top: 12px;
}

.dlg-max {
    width: 17px;
    height: 22px;
    border: 3px solid #000;
    background: linear-gradient(#fff, #aaa);
}

.dlg-menu {
    height: 36px;
    width: 1852px;
    flex: none;
    display: flex;
    align-items: center;
    gap: 20px;
    font-size: 23.5px;
    line-height: 1.2;
    color: #000;
    background: linear-gradient(180deg, #bdb8b8 0, #d9d6d6 12px, #f5f5f5 24px);
    border-bottom: 1px solid #cfcdcf;
}

.dlg-menu-first {
    margin-left: -8px;
}

.dlg-body {
    flex: 1;
    width: 1852px;
    display: flex;
    min-height: 0;
}

.dlg-foot {
    height: 10px;
    flex: none;
    background: linear-gradient(180deg, #0a3a5e, #1a5078 40%, #00223e 60%);
}

/* arbol */
.tree {
    width: 232px;
    flex: none;
    background: #fff;
    border-right: 7px solid #d8d6d8;
    padding-top: 5px;
    font-size: 28px;
    line-height: 32px;
    color: #000;
}

.tree-root {
    height: 32px;
    padding-left: 16px;
    position: relative;
}

.tree-knob {
    position: absolute;
    left: -8px;
    top: 8px;
    width: 12px;
    height: 16px;
    background: #e8d400;
    border: 2px solid #101878;
    border-radius: 50%;
}

.tree-row {
    height: 32px;
    display: flex;
    align-items: center;
    white-space: nowrap;
    background: linear-gradient(90deg, #888 50%, transparent 50%) 0 50% / 5px 2px no-repeat, linear-gradient(90deg, #888 50%, transparent 50%) 6px 50% / 5px 2px no-repeat;
}

.tree-row svg {
    width: 30px;
    height: 30px;
    margin-left: 14px;
    margin-right: 10px;
    flex: none;
}

/* columna central */
.main {
    width: 1390px;
    flex: none;
    background: #e3e1e3;
    display: flex;
    flex-direction: column;
    padding-top: 10px;
}

.wtabs {
    display: flex;
    height: 34px;
    padding-left: 9px;
    gap: 4px;
}

.wtab {
    height: 34px;
    width: 177px;
    border: 2px solid #8c8c8c;
    border-bottom: 0;
    border-radius: 5px 5px 0 0;
    background: #f6f6f6;
    display: flex;
    align-items: center;
    padding-left: 20px;
    gap: 3px;
    font-size: 27px;
    line-height: 30px;
    color: #000;
    white-space: nowrap;
}

.wtab svg {
    flex: none;
}

.wtab-on {
    border-top: 3px solid #3b78d0;
    background: #fff;
}

.wtab-2 {
    width: 174px;
    padding-left: 12px;
}

.wtab-3 {
    width: 199px;
    margin-left: 3px;
    padding-left: 12px;
}

.wtab-4 {
    width: 174px;
    margin-left: 5px;
    padding-left: 14px;
}

.frame {
    width: 1374px;
    height: 1553px;
    margin-left: 4px;
    border: 3px solid #8c8c8c;
    padding: 7px 2px 2px 7px;
    background: #e8e6e8;
}

.result {
    height: 100%;
    display: flex;
    background: #d4d0c8;
    border: 1px solid #c4c2c4;
    border-width: 1px 0 0 1px;
}

.result-text {
    width: 1326px;
    flex: none;
    padding: 4px 0 0 2px;
    font-size: 32px;
    line-height: 40px;
    color: #111;
    white-space: nowrap;
}

.ln {
    height: 40px;
}

.ln-shift {
    padding-left: 48px;
}

.d {
    font-family: "Liberation Serif", serif;
}

.p {
    display: inline-block;
    width: 16px;
    text-align: center;
    font-family: "Liberation Mono", monospace;
    font-size: 26px;
    line-height: 1;
}

.p-wide {
    width: 22px;
}

.red {
    color: #f00;
}

.blue {
    color: #0000e6;
    font-weight: 700;
}

.bz {
    display: grid;
    grid-template-columns: 96px 192px 192px 192px 1fr;
    grid-auto-rows: 40px;
}

.zhi-on {
    display: inline-block;
    width: 48px;
    height: 40px;
    background: #2c3540;
    color: #1ee6e6;
}

.yun {
    display: grid;
    grid-template-columns: 80px repeat(10, 96px);
    height: 40px;
}

.nums {
    font-family: "Liberation Serif", "Noto Sans CJK SC", serif;
}

.gua-head {
    margin-top: 40px;
    height: 30px;
    font-size: 25px;
    line-height: 30px;
    font-weight: 700;
    color: #0000e6;
}

.gua-row {
    display: flex;
    margin-top: 2px;
    height: 34px;
    font-size: 25px;
    line-height: 34px;
    color: #111;
}

.gua-row span {
    width: 106px;
}

.gua-row span:first-child {
    width: 108px;
}

.vscroll {
    width: 32px;
    flex: none;
    background: #f4f2f4;
    border: 1px solid #bbb;
    display: flex;
    flex-direction: column;
}

.vs-btn {
    height: 32px;
    flex: none;
    background: #fff;
    border: 1px solid #aaa;
    display: flex;
    align-items: center;
    justify-content: center;
}

.vs-thumb {
    height: 36px;
    margin: 4px 6px 0;
    background: linear-gradient(90deg, #c0ccdc, #a8b8cc);
    border: 1px solid #7a8aa0;
}

.vs-end {
    margin-top: auto;
}

.remark {
    width: 1374px;
    height: 36px;
    margin: 15px 0 0 4px;
    background: #fff;
    border-top: 2px solid #d8d6d8;
    display: flex;
    align-items: center;
    padding-left: 6px;
}

.remark-text {
    font-size: 29px;
    line-height: 34px;
    color: #000;
}

.remark-spin {
    margin-left: auto;
    margin-right: 3px;
    width: 28px;
    height: 32px;
    background: #e6e6ea;
    border: 1px solid #aaa;
    display: flex;
    flex-direction: column;
    align-items: center;
    justify-content: space-around;
}

/* panel derecho */
.ctl {
    flex: 1;
    background: #e4e2e4;
    border-left: 1px solid #bdbbbd;
    display: flex;
    flex-direction: column;
    align-items: flex-start;
    padding-top: 15px;
    font-size: 27px;
    color: #111;
    white-space: nowrap;
}

.big-btn {
    font-family: inherit;
    font-size: 27px;
    color: #111;
    border: 2px solid #a8a8a8;
    border-bottom-color: #777;
    border-radius: 9px;
    background: linear-gradient(180deg, #fff, #f2f2f2 70%, #d8d8d8);
    display: flex;
    align-items: center;
    justify-content: center;
    gap: 4px;
    padding: 0;
    flex: none;
}

.new-btn {
    width: 185px;
    height: 53px;
    margin-left: 17px;
}

.year-row {
    display: flex;
    gap: 3px;
    margin: 20px 0 15px 16px;
    height: 48px;
}

.year-input {
    width: 161px;
    height: 43px;
    background: #fff;
    border: 2px solid #c4c4c4;
    padding-left: 5px;
    font: 700 29px/38px "Liberation Serif", serif;
    letter-spacing: 1px;
    color: #000;
}

.year-spin {
    width: 33px;
    height: 48px;
    background: #b2c6f2;
    border: 2px solid #fff;
    display: flex;
    flex-direction: column;
    align-items: center;
    justify-content: center;
    gap: 3px;
}

.combo {
    display: flex;
    width: 200px;
    height: 43px;
    flex: none;
    margin-left: 15px;
    background: #fff;
    border: 2px solid #777;
}

.combo-val {
    flex: 1;
    padding-left: 6px;
    line-height: 38px;
}

.combo-btn {
    width: 38px;
    flex: none;
    background: #f2f2f8;
    border-left: 1px solid #ccc;
    display: flex;
    align-items: center;
    justify-content: center;
}

.combo-date {
    margin-bottom: 21px;
}

.combo-date .combo-val {
    font-weight: 700;
    color: #000;
}

.opt-row {
    display: flex;
    align-items: center;
    height: 30px;
    flex: none;
    line-height: 30px;
}

.radio {
    width: 25px;
    height: 25px;
    border-radius: 50%;
    border: 2px solid #4a6a80;
    background: #f4f6f6;
    margin-right: 4px;
}

.radio-on {
    background: radial-gradient(circle, #22a022 0 4px, #e8f0e8 5px);
}

.check {
    width: 26px;
    height: 24px;
    border: 2px solid #1c3c68;
    background: #eef0f6;
    margin-right: 4px;
}

.cal-row {
    margin: 1px 0 0 17px;
}

.cal-row span:nth-of-type(1) {
    margin-right: 15px;
}

.leap-row {
    margin: 18px 0 0 17px;
}

.sex-row {
    margin: 31px 0 0 21px;
}

.sex-row span:nth-of-type(1) {
    margin-right: 36px;
}

.name-row {
    display: flex;
    align-items: center;
    margin: 22px 0 0 7px;
    gap: 10px;
}

.name-input {
    width: 150px;
    height: 43px;
    background: #fff;
    border: 2px solid #d0d0d0;
    padding-left: 4px;
    line-height: 36px;
}

.combo-place {
    margin-top: 25px;
}

.city-row {
    display: flex;
    align-items: center;
    margin: 22px 0 0 17px;
}

.city-arrow {
    width: 30px;
    font: 24px "Liberation Sans", sans-serif;
}

.combo-city {
    width: 174px;
    margin-left: 0;
}

.save-row {
    display: flex;
    align-items: center;
    height: 30px;
    margin: 20px 0 0 15px;
    line-height: 30px;
}

.save-icon {
    margin-left: 38px;
}

.del-icon {
    margin-left: 43px;
}

.paipan-btn {
    width: 208px;
    height: 67px;
    margin: 17px 0 0 10px;
}

.ctl-sep {
    width: 100%;
    height: 1px;
    margin-top: 21px;
    flex: none;
    background: #fff;
}

.ctl-label {
    height: 30px;
    line-height: 30px;
    margin-left: 9px;
    flex: none;
}

.quick-label {
    margin-top: 15px;
}

.more-label {
    margin-top: 31px;
}

.combo-wide {
    width: 209px;
    margin: 6px 0 0 9px;
}

.combo-more {
    margin-top: 9px;
}

.val-blue {
    color: #1010e0;
}

.val-green {
    color: #0a7a0a;
    width: 163px;
    overflow: hidden;
}
```
